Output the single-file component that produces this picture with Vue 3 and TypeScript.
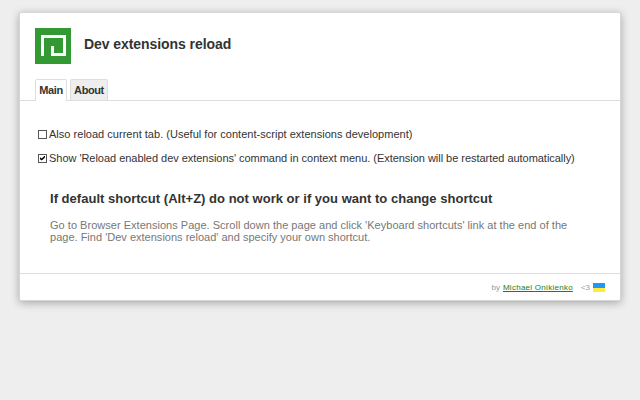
<script setup lang="ts">
import { ref } from 'vue'

const activeTab = ref('Main')
const tabs: string[] = ['Main', 'About']
const reloadTab = ref(false)
const contextMenu = ref(true)
</script>

<template>
  <div class="page">
    <main class="card">
      <header class="header">
        <svg class="logo" viewBox="0 0 36 36" aria-hidden="true">
          <rect width="36" height="36" fill="#339933" />
          <path d="M7.5 28V8.5H29.5V26.5H17.5V18" fill="none" stroke="#fff" stroke-width="3" />
        </svg>
        <h1>Dev extensions reload</h1>
      </header>
      <nav class="tabs">
        <button v-for="tab in tabs" :key="tab" class="tab" :class="{ active: tab === activeTab }" @click="activeTab = tab">{{ tab }}</button>
      </nav>
      <section class="content">
        <label class="option first">
          <input v-model="reloadTab" type="checkbox">
          <span>Also reload current tab. (Useful for content-script extensions development)</span>
        </label>
        <label class="option second">
          <input v-model="contextMenu" type="checkbox">
          <span>Show 'Reload enabled dev extensions' command in context menu. (Extension will be restarted automatically)</span>
        </label>
        <div class="help">
          <h2>If default shortcut (Alt+Z) do not work or if you want to change shortcut</h2>
          <p>
            <span class="line">Go to Browser Extensions Page. Scroll down the page and click 'Keyboard shortcuts' link at the end of the</span>
            <span class="line last">page. Find 'Dev extensions reload' and specify your own shortcut.</span>
          </p>
        </div>
      </section>
      <footer class="footer">
        <span>by</span>
        <a href="#">Michael Onikienko</a>
        <span class="heart">&lt;3</span>
        <span class="flag"></span>
      </footer>
    </main>
  </div>
</template>

<style>
body {
  background: #eee;
}
</style>

<style scoped>
.page {
  box-sizing: border-box;
  min-height: 100vh;
  padding: 12px 0 0 19px;
  background: #eee;
}
.card {
  box-sizing: border-box;
  width: 602px;
  height: 289px;
  display: flex;
  flex-direction: column;
  background: #fff;
  border: 1px solid #d6d6d6;
  border-radius: 2px;
  box-shadow: 0 2px 8px rgba(0, 0, 0, 0.3);
  font-family: "Liberation Sans", Arial, sans-serif;
  color: #333;
  white-space: nowrap;
}
.header {
  display: flex;
  height: 51px;
  padding: 15px 15px 0;
}
.logo {
  width: 36px;
  height: 36px;
}
h1 {
  margin: 8px 0 0 13px;
  font-size: 14px;
  line-height: 16px;
  letter-spacing: -0.07px;
}
.tabs {
  display: flex;
  gap: 3px;
  height: 21px;
  padding: 0 15px;
  border-bottom: 1px solid #ddd;
}
.tab {
  box-sizing: border-box;
  height: 21px;
  padding: 0;
  width: 38px;
  border: 1px solid #ddd;
  border-bottom: 0;
  border-radius: 2px 2px 0 0;
  background: #eee;
  color: #333;
  font: bold 11px/20px "Liberation Sans", Arial, sans-serif;
  letter-spacing: -0.4px;
}
.tab.active {
  width: 32px;
  height: 22px;
  padding-bottom: 1px;
  background: #fff;
}
.content {
  height: 172px;
  padding: 0 18px;
  box-sizing: border-box;
}
.option {
  display: flex;
  align-items: center;
  gap: 2px;
  height: 14px;
  font-size: 11px;
}
.option.first {
  margin-top: 26px;
  letter-spacing: 0.02px;
}
.option.second {
  margin-top: 10px;
  letter-spacing: -0.035px;
}
input {
  appearance: none;
  box-sizing: border-box;
  display: grid;
  place-items: center;
  width: 9px;
  height: 9px;
  margin: 0;
  border: 1px solid #555;
  background: #fff;
}
input:checked::before {
  content: "";
  width: 5px;
  height: 5px;
  background: #000;
  clip-path: polygon(0 35%, 35% 60%, 100% 0, 100% 40%, 35% 100%, 0 75%);
}
.help {
  padding: 26px 0 0 12px;
}
h2 {
  margin: 0;
  font-size: 13px;
  line-height: 16px;
  letter-spacing: 0.02px;
}
p {
  margin: 12px 0 0;
  color: #777;
  font-size: 11px;
  line-height: 12px;
  letter-spacing: 0.023px;
}
.line {
  display: block;
}
.line.last {
  letter-spacing: 0.01px;
}
.footer {
  display: flex;
  align-items: center;
  flex: 1;
  padding: 0 15px;
  justify-content: flex-end;
  border-top: 1px solid #ddd;
  color: #999;
  font-size: 8px;
}
a {
  margin-left: 3px;
  color: #178017;
  letter-spacing: 0.27px;
}
.heart {
  margin-left: 8px;
}
.flag {
  width: 12px;
  height: 9px;
  margin-left: 3px;
  background: linear-gradient(#2196f3 50%, #ffeb3b 50%);
}
</style>
